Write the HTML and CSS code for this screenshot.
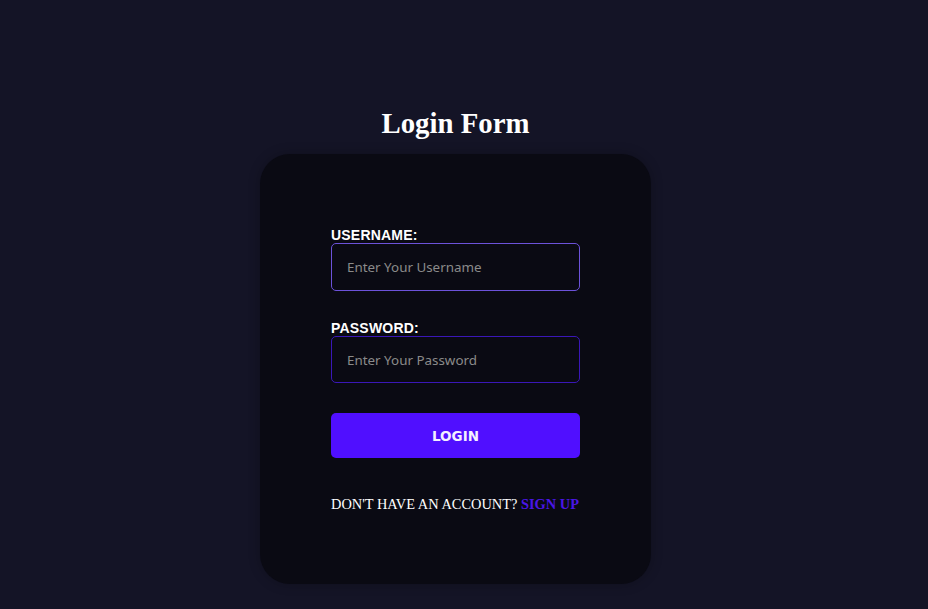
FILE: index.html
```html
<!DOCTYPE html>
<html lang="en">
<head>
<meta charset="utf-8">
<title>Login Form</title>
<link rel="stylesheet" href="styles.css">
</head>
<body>
<main class="page">
  <h1 class="title">Login Form</h1>
  <form class="card">
    <label class="label" for="username">USERNAME:</label>
    <input class="field field-focus" id="username" type="text" placeholder="Enter Your Username" autofocus>
    <label class="label label-second" for="password">PASSWORD:</label>
    <input class="field" id="password" type="password" placeholder="Enter Your Password">
    <button class="btn" type="button">LOGIN</button>
    <p class="signup">DON'T HAVE AN ACCOUNT? <a class="signup-link" href="#">SIGN UP</a></p>
  </form>
</main>
</body>
</html>
```
FILE: styles.css
```css
html, body {
  margin: 0;
  padding: 0;
  background: #141426;
  height: 100%;
}
body {
  font-family: "Liberation Serif", "Times New Roman", serif;
  color: #ffffff;
}
.page {
  display: flex;
  flex-direction: column;
  align-items: center;
  padding-top: 107px;
  padding-right: 17px;
}
.title {
  margin: 0 0 14px;
  font-size: 28.8px;
  font-weight: bold;
  line-height: 33px;
  color: #ffffff;
}
.card {
  box-sizing: border-box;
  width: 391px;
  height: 430px;
  background: #0a0a13;
  border-radius: 30px;
  box-shadow: 0 0 12px rgba(0, 0, 0, 0.25);
  padding: 73px 71px 0;
  display: flex;
  flex-direction: column;
}
.label {
  font-family: "Liberation Sans", Arial, sans-serif;
  font-weight: bold;
  font-size: 14px;
  line-height: 16px;
  color: #ffffff;
  letter-spacing: 0.2px;
}
.label-second {
  margin-top: 29px;
}
.field {
  box-sizing: border-box;
  margin-top: 0;
  width: 249px;
  height: 48px;
  background: #0a0a13;
  border: 1px solid #3a17b8;
  border-radius: 5px;
  padding: 0 15px;
  font-family: "Noto Sans", "Open Sans", sans-serif;
  font-size: 13.4px;
  color: #dddddd;
  outline: none;
}
#password { height: 47px; }
.field::placeholder {
  color: #8a8a8a;
}
.field-focus,
.field:focus {
  border-color: #6c52d9;
}
.btn {
  margin-top: 30px;
  width: 249px;
  height: 45px;
  border: none;
  border-radius: 5px;
  background: #500fff;
  color: #f4f0ff;
  font-family: "DejaVu Sans", Verdana, sans-serif;
  font-weight: bold;
  font-size: 13.5px;
  cursor: pointer;
}
.signup {
  margin: 38px 0 0;
  font-size: 14.4px;
  line-height: 17px;
  color: #ffffff;
  white-space: nowrap;
}
.signup-link {
  color: #4a16e6;
  font-weight: bold;
  text-decoration: none;
}
```
